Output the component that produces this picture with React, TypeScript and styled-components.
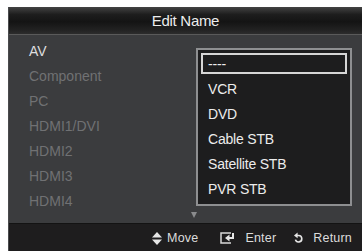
import { FC } from 'react';
import styled, { createGlobalStyle } from 'styled-components';

const GlobalStyle = createGlobalStyle`
  html, body {
    margin: 0;
    padding: 0;
    background: #ffffff;
  }
  body {
    font-family: 'Liberation Sans', Arial, sans-serif;
  }
`;

const Page = styled.div`
  padding: 7px 0 0 8px;
  width: 362px;
  height: 251px;
  box-sizing: border-box;
  overflow: hidden;
`;

const Frame = styled.div`
  width: 354px;
  height: 244px;
  display: flex;
  flex-direction: column;
  background: #3b3c3e;
  border-left: 1px solid #4a4b4d;
  box-sizing: border-box;
`;

const Header = styled.header`
  height: 28px;
  flex-shrink: 0;
  display: flex;
  align-items: center;
  justify-content: center;
  background: linear-gradient(#434343 0%, #1d1d1d 28%, #141414 55%, #222222 85%, #2c2c2c 100%);
  border-bottom: 1px solid #5a5a5a;
  color: #ececec;
  font-size: 15px;
  letter-spacing: -0.3px;
  padding-bottom: 1px;
  box-sizing: border-box;
`;

const Body = styled.main`
  flex: 1;
  display: flex;
  flex-direction: row;
`;

const SourceList = styled.ul`
  list-style: none;
  margin: 0;
  padding: 4px 0 0 20px;
  width: 167px;
`;

const SourceItem = styled.li<{ $active?: boolean }>`
  height: 25px;
  line-height: 25px;
  font-size: 14px;
  color: ${p => (p.$active ? '#dedede' : '#707173')};
`;

const MenuColumn = styled.div`
  display: flex;
  flex-direction: column;
  padding-top: 13px;
`;

const Menu = styled.ul`
  list-style: none;
  margin: 0;
  width: 156px;
  height: 158px;
  box-sizing: border-box;
  padding: 1px 0 3px;
  border: 2px solid #8e8f91;
  background: #1d1d1e;
`;

const MenuItem = styled.li`
  height: 25px;
  padding: 2px 3px;
  box-sizing: border-box;
  display: flex;
`;

const MenuLabel = styled.span<{ $selected?: boolean }>`
  flex: 1;
  display: flex;
  align-items: center;
  padding-left: 5px;
  font-size: 14px;
  letter-spacing: -0.2px;
  color: #ececec;
  border: 2px solid ${p => (p.$selected ? '#d6d6d6' : 'transparent')};
`;

const ScrollArrow = styled.div`
  margin: 6px 0 0 -5px;
  width: 0;
  height: 0;
  border-left: 3px solid transparent;
  border-right: 3px solid transparent;
  border-top: 6px solid #8a8b8d;
`;

const Footer = styled.footer`
  height: 28px;
  flex-shrink: 0;
  display: flex;
  align-items: center;
  justify-content: flex-end;
  padding: 1px 10px 0 0;
  background: #1e1d1e;
  border-top: 1px solid #131313;
  box-sizing: border-box;
`;

const Hint = styled.span<{ $gap: number; $space: number }>`
  display: flex;
  align-items: center;
  gap: ${p => p.$gap}px;
  margin-left: ${p => p.$space}px;
  font-size: 12.5px;
  letter-spacing: 0.2px;
  color: #dcdcdc;
`;

const sources = ['AV', 'Component', 'PC', 'HDMI1/DVI', 'HDMI2', 'HDMI3', 'HDMI4'];
const names = ['----', 'VCR', 'DVD', 'Cable STB', 'Satellite STB', 'PVR STB'];

const MoveIcon = () => (
  <svg width="10" height="13" viewBox="0 0 10 13">
    <polygon points="5,0 10,5.5 0,5.5" fill="#e6e6e6" />
    <polygon points="0,7.5 10,7.5 5,13" fill="#e6e6e6" />
  </svg>
);

const EnterIcon = () => (
  <svg width="16" height="12" viewBox="0 0 16 12">
    <path d="M11 1H1v10h10" fill="none" stroke="#d8d8d8" strokeWidth="1.5" />
    <path d="M13 1v5H9" fill="none" stroke="#e6e6e6" strokeWidth="2" />
    <polygon points="5,6 9.5,2.5 9.5,9.5" fill="#e6e6e6" />
  </svg>
);

const ReturnIcon = () => (
  <svg width="9" height="12" viewBox="0 0 10 12">
    <path d="M3 3.2h2.2a3.6 3.6 0 1 1 -3.6 4.6" fill="none" stroke="#e6e6e6" strokeWidth="1.8" />
    <polygon points="0,3.2 4,0 4,6.4" fill="#e6e6e6" />
  </svg>
);

const App: FC = () => (
  <>
    <GlobalStyle />
    <Page>
      <Frame>
        <Header>Edit Name</Header>
        <Body>
          <SourceList>
            {sources.map((s, i) => (
              <SourceItem key={s} $active={i === 0}>
                {s}
              </SourceItem>
            ))}
          </SourceList>
          <MenuColumn>
            <Menu>
              {names.map((n, i) => (
                <MenuItem key={n}>
                  <MenuLabel $selected={i === 0}>{n}</MenuLabel>
                </MenuItem>
              ))}
            </Menu>
            <ScrollArrow />
          </MenuColumn>
        </Body>
        <Footer>
          <Hint $gap={5} $space={0}>
            <MoveIcon />
            Move
          </Hint>
          <Hint $gap={9} $space={22}>
            <EnterIcon />
            Enter
          </Hint>
          <Hint $gap={10} $space={18}>
            <ReturnIcon />
            Return
          </Hint>
        </Footer>
      </Frame>
    </Page>
  </>
);

export default App;
